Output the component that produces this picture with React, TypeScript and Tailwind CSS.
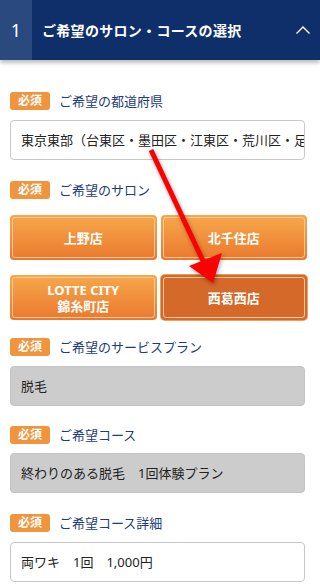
import React from "react";

const font = { fontFamily: '"Noto Sans", "Noto Sans CJK JP", sans-serif' };

function Badge() {
  return (
    <span className="inline-flex h-[18px] w-[40px] items-center justify-center rounded-[3px] bg-[#f0953e] text-[12px] font-bold leading-none text-white">
      必須
    </span>
  );
}

function Label({ children }: { children: React.ReactNode }) {
  return (
    <div className="flex h-[18px] items-center gap-[9px]">
      <Badge />
      <span className="text-[13px] leading-none text-[#1d3c78]">{children}</span>
    </div>
  );
}

function SalonButton({ label, active }: { label: React.ReactNode; active?: boolean }) {
  return (
    <button
      type="button"
      className={`flex h-[45px] items-center justify-center rounded-[4px] p-[2px] ${
        active
          ? "bg-[#d4692a] shadow-[0_0_0_1px_#e5a062]"
          : "bg-gradient-to-b from-[#f6a84b] to-[#ea782e]"
      }`}
    >
      <span className="flex h-full w-full items-center justify-center rounded-[3px] border border-[#f9c89a] text-center text-[13px] font-bold leading-[16px] text-white">
        {label}
      </span>
    </button>
  );
}

const field = "flex h-[40px] w-[295px] items-center overflow-hidden whitespace-nowrap rounded-[4px] pl-[10px] text-[13px] leading-none text-[#222]";

export default function App() {
  return (
    <div className="relative h-[588px] w-[320px] overflow-hidden bg-white" style={font}>
      <div className="flex h-[60px] bg-[#0f2f6b] shadow-[0_3px_4px_rgba(0,0,0,0.25)]">
        <div className="flex w-[32px] items-center justify-center bg-[#2a4a7f] text-[18px] text-white">1</div>
        <div className="flex flex-1 items-center pl-[10px] text-[14px] font-bold tracking-[0.3px] text-white">
          ご希望のサロン・コースの選択
        </div>
        <div className="flex w-[34px] items-center justify-center">
          <svg width="16" height="10" viewBox="0 0 16 10" fill="none">
            <path d="M1.5 8.5 L8 2 L14.5 8.5" stroke="white" strokeWidth="1.4" />
          </svg>
        </div>
      </div>

      <div className="flex flex-col px-[10px] pt-[32px]">
        <Label>ご希望の都道府県</Label>
        <div className={`${field} mt-[10px] border border-[#c8c8c8]`}>
          東京東部（台東区・墨田区・江東区・荒川区・足立区）
        </div>

        <div className="mt-[21px]">
          <Label>ご希望のサロン</Label>
        </div>
        <div className="mt-[16px] grid w-[297px] grid-cols-2 gap-x-[4px] gap-y-[15px]">
          <SalonButton label="上野店" />
          <SalonButton label="北千住店" />
          <SalonButton
            label={
              <span className="flex flex-col">
                <span>LOTTE CITY</span>
                <span>錦糸町店</span>
              </span>
            }
          />
          <SalonButton label="西葛西店" active />
        </div>

        <div className="mt-[18px]">
          <Label>ご希望のサービスプラン</Label>
        </div>
        <div className={`${field} mt-[10px] border border-[#c4c4c4] bg-[#cccccc]`}>脱毛</div>

        <div className="mt-[20px]">
          <Label>ご希望コース</Label>
        </div>
        <div className={`${field} mt-[9px] border border-[#c4c4c4] bg-[#cccccc]`}>
          終わりのある脱毛　1回体験プラン
        </div>

        <div className="mt-[21px]">
          <Label>ご希望コース詳細</Label>
        </div>
        <div className={`${field} mt-[10px] border border-[#c8c8c8]`}>両ワキ　1回　1,000円</div>
      </div>

      <svg
        className="pointer-events-none absolute left-0 top-0"
        width="320"
        height="588"
        viewBox="0 0 320 588"
        style={{ filter: "drop-shadow(1px 2px 2px rgba(0,0,0,0.35))" }}
      >
        <path d="M151 150 L204 263" stroke="#ff0000" strokeWidth="5" />
        <polygon points="189,266 222,253 213,283" fill="#ff0000" />
      </svg>
    </div>
  );
}
